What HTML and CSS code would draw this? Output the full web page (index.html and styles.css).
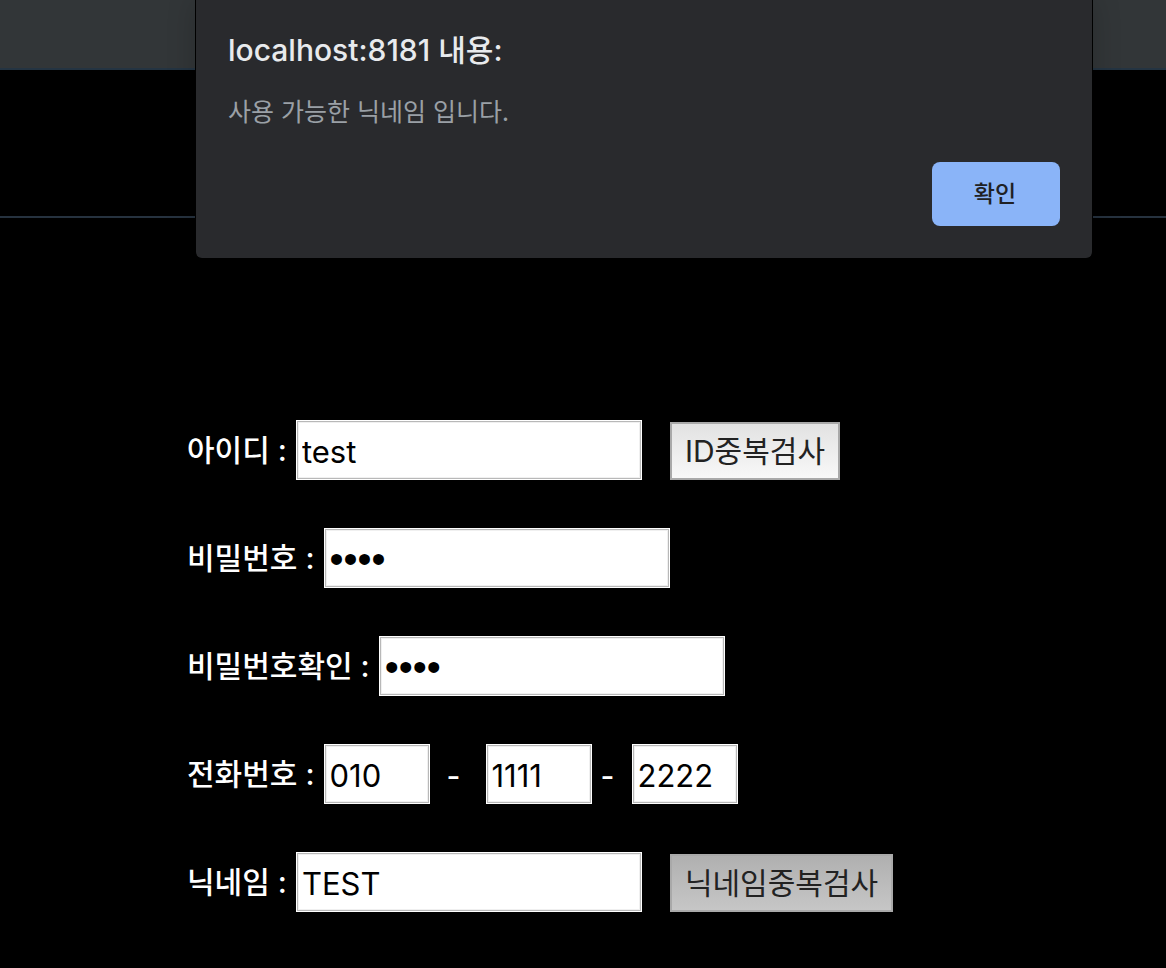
FILE: index.html
```html
<!DOCTYPE html>
<html lang="ko">
<head>
<meta charset="utf-8">
<meta name="viewport" content="width=device-width, initial-scale=1">
<title>회원가입</title>
<link rel="stylesheet" href="styles.css">
</head>
<body>
<header class="topbar"></header>
<div class="subbar"></div>
<main>
  <form class="join">
    <div class="row">
      <label for="uid">아이디 :</label>
      <input class="field" id="uid" type="text" value="test">
      <button class="check" type="button">ID중복검사</button>
    </div>
    <div class="row">
      <label for="pw">비밀번호 :</label>
      <input class="field field-secret" id="pw" type="password" value="test">
    </div>
    <div class="row">
      <label for="pw2">비밀번호확인 :</label>
      <input class="field field-secret" id="pw2" type="password" value="test">
    </div>
    <div class="row">
      <label for="tel1">전화번호 :</label>
      <input class="field field-short" id="tel1" type="text" value="010">
      <span class="dash dash-wide">-</span>
      <input class="field field-short" type="text" value="1111" aria-label="전화번호 가운데 자리">
      <span class="dash">-</span>
      <input class="field field-short" type="text" value="2222" aria-label="전화번호 끝자리">
    </div>
    <div class="row">
      <label for="nick">닉네임 :</label>
      <input class="field" id="nick" type="text" value="TEST">
      <button class="check check-pressed" type="button">닉네임중복검사</button>
    </div>
  </form>
</main>
<section class="dialog" role="alertdialog" aria-labelledby="dialog-title" aria-describedby="dialog-text">
  <h1 class="dialog-title" id="dialog-title">localhost:8181 내용:</h1>
  <p class="dialog-text" id="dialog-text">사용 가능한 닉네임 입니다.</p>
  <button class="confirm" type="button">확인</button>
</section>
</body>
</html>
```

FILE: styles.css
```css
* {
  box-sizing: border-box;
}

body {
  margin: 0;
  background: #000;
  color: #fff;
  font-family: Inter, "Noto Sans CJK KR", sans-serif;
  font-size: 30px;
}

button,
input {
  margin: 0;
  font: inherit;
}

.topbar {
  height: 70px;
  background: #323638;
  border-bottom: 2px solid #243442;
}

.subbar {
  height: 148px;
  border-bottom: 2px solid #26323f;
}

.join {
  display: flex;
  flex-direction: column;
  gap: 48px;
  padding: 202px 0 56px 187px;
}

.row {
  display: flex;
  align-items: center;
  height: 60px;
}

.row label {
  margin-right: 9px;
  padding-bottom: 4px;
  font-weight: 500;
  white-space: nowrap;
}

.field {
  width: 346px;
  height: 60px;
  padding: 2px 5px 0;
  border: 1px solid #fff;
  border-radius: 0;
  outline: 0;
  background: #fff;
  box-shadow: inset 0 0 0 1px #b8b8b8, inset 0 0 0 2px #f0f0f0;
  color: #000;
  font-size: 31px;
}

.field-short {
  width: 106px;
}

.field-secret {
  font-family: "Liberation Sans", sans-serif;
  font-size: 40px;
}

.dash {
  width: 40px;
  padding-right: 8px;
  padding-top: 4px;
  text-align: center;
  font-weight: 500;
}

.dash-wide {
  width: 56px;
}

.check {
  align-self: flex-end;
  height: 58px;
  margin-left: 28px;
  padding: 0 13px;
  border: 2px solid #a9a9a9;
  background: linear-gradient(#e2e2e2, #f8f8f8);
  color: #222;
  line-height: 52px;
  white-space: nowrap;
}

.check-pressed {
  background: linear-gradient(#b0b0b0, #c6c6c6);
}

.dialog {
  position: absolute;
  top: 0;
  left: 196px;
  display: flex;
  flex-direction: column;
  width: 896px;
  padding: 28px 32px 32px;
  border-radius: 0 0 6px 6px;
  background: #292a2d;
  box-shadow: 0 0 0 1px #000, 0 0 30px rgba(0, 0, 0, 0.2);
}

.dialog-title {
  margin: 0;
  color: #e8eaed;
  font-size: 30px;
  font-weight: 500;
  line-height: 44px;
}

.dialog-text {
  margin: 18px 0 32px;
  color: #9aa0a6;
  font-family: "Noto Sans CJK KR", sans-serif;
  font-size: 25px;
  line-height: 40px;
}

.confirm {
  align-self: flex-end;
  width: 128px;
  height: 64px;
  padding: 0 2px 4px 0;
  border: 0;
  border-radius: 8px;
  background: #8ab4f8;
  color: #202124;
  font-size: 23px;
  font-weight: 500;
}
```
